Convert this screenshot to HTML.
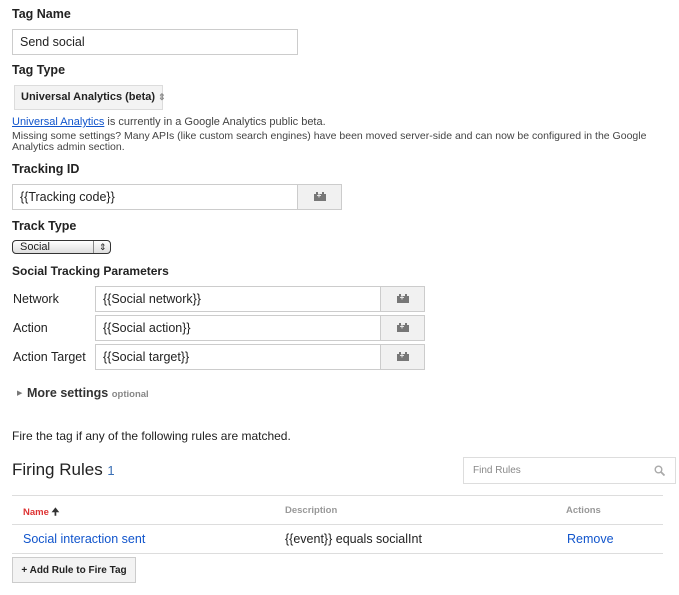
<!DOCTYPE html>
<html><head><style>
body{margin:0;width:679px;height:595px;background:#fff;font-family:"Liberation Sans",Arial,sans-serif;color:#222;position:relative;overflow:hidden}
.a{position:absolute;white-space:nowrap}
.h{font-weight:bold;font-size:12.5px}
.in{position:absolute;border:1px solid #ccc;box-sizing:border-box;font-size:12.5px;padding-left:7px;line-height:24px;background:#fff}
.bt{position:absolute;border:1px solid #ccc;border-left:none;box-sizing:border-box;background:#f1f1f1}
.bt i{position:absolute;left:50%;top:50%;width:12px;height:7px;margin:-3px 0 0 -6px;background:#777}
.bt i:before{content:"";position:absolute;left:2px;top:-2px;width:2px;height:2px;background:#777;box-shadow:6px 0 #777}
.bt i:after{content:"+";position:absolute;left:3px;top:-3px;color:#eee;font-size:8px;font-weight:bold}
.s{font-size:11px}
</style></head><body>
<div class="a h" style="left:12px;top:7px">Tag Name</div>
<div class="in" style="left:12px;top:29px;width:286px;height:26px">Send social</div>
<div class="a h" style="left:12px;top:63px">Tag Type</div>
<div class="a" style="left:14px;top:85px;width:149px;height:25px;box-sizing:border-box;border:1px solid #dcdcdc;background:#f3f3f3;font-size:11px;font-weight:bold;line-height:23px;padding-left:6px">Universal Analytics (beta) <span style="color:#888;font-size:9px">&#8661;</span></div>
<div class="a s" style="left:12px;top:116px;color:#444"><span style="color:#15c;text-decoration:underline">Universal Analytics</span> is currently in a Google Analytics public beta.</div>
<div class="a" style="left:12px;top:131px;color:#444;font-size:10.5px;line-height:11px;white-space:normal;width:665px">Missing some settings? Many APIs (like custom search engines) have been moved server-side and can now be configured in the Google Analytics admin section.</div>
<div class="a h" style="left:12px;top:162px">Tracking ID</div>
<div class="in" style="left:12px;top:184px;width:286px;height:26px">{{Tracking code}}</div>
<div class="bt" style="left:298px;top:184px;width:44px;height:26px"><i></i></div>
<div class="a h" style="left:12px;top:219px">Track Type</div>
<div class="a" style="left:12px;top:240px;width:99px;height:14px;box-sizing:border-box;border:1px solid #333;border-radius:4px;background:linear-gradient(#fff,#ddd);font-size:11px;line-height:12px;padding-left:7px">Social<span style="position:absolute;left:80px;top:0;height:12px;border-left:1px solid #888;padding-left:5px;font-size:9px">&#8661;</span></div>
<div class="a" style="left:12px;top:264px;font-weight:bold;font-size:12px">Social Tracking Parameters</div>
<div class="a" style="left:13px;top:292px;font-size:12.5px">Network</div>
<div class="in" style="left:95px;top:286px;width:286px;height:26px">{{Social network}}</div>
<div class="bt" style="left:381px;top:286px;width:44px;height:26px"><i></i></div>
<div class="a" style="left:13px;top:321px;font-size:12.5px">Action</div>
<div class="in" style="left:95px;top:315px;width:286px;height:26px">{{Social action}}</div>
<div class="bt" style="left:381px;top:315px;width:44px;height:26px"><i></i></div>
<div class="a" style="left:13px;top:350px;font-size:12.5px">Action Target</div>
<div class="in" style="left:95px;top:344px;width:286px;height:26px">{{Social target}}</div>
<div class="bt" style="left:381px;top:344px;width:44px;height:26px"><i></i></div>
<div class="a" style="left:17px;top:389px;font-size:7px;color:#777">&#9654;</div>
<div class="a" style="left:27px;top:386px;font-size:12.5px;font-weight:bold;color:#333">More settings <span style="font-size:9.5px;color:#888">optional</span></div>
<div class="a" style="left:12px;top:429px;font-size:12px">Fire the tag if any of the following rules are matched.</div>
<div class="a" style="left:12px;top:460px;font-size:17px;color:#222">Firing Rules <span style="font-size:13px;color:#3a6fb5">1</span></div>
<div class="a" style="left:463px;top:457px;width:213px;height:27px;box-sizing:border-box;border:1px solid #ddd;font-size:10px;color:#888;line-height:26px;padding-left:9px">Find Rules<svg style="position:absolute;right:10px;top:7px" width="11" height="11" viewBox="0 0 11 11"><circle cx="4.5" cy="4.5" r="3.3" fill="none" stroke="#aaa" stroke-width="1.4"/><path d="M7 7l3.5 3.5" stroke="#aaa" stroke-width="1.8"/></svg></div>
<div class="a" style="left:12px;top:495px;width:651px;border-top:1px solid #ddd"></div>
<div class="a" style="left:23px;top:505px;font-size:9.5px;font-weight:bold;color:#d33">Name <span style="color:#333">&#129033;</span></div>
<div class="a" style="left:285px;top:505px;font-size:9.5px;font-weight:bold;color:#999">Description</div>
<div class="a" style="left:566px;top:505px;font-size:9.5px;font-weight:bold;color:#999">Actions</div>
<div class="a" style="left:12px;top:524px;width:651px;border-top:1px solid #ddd"></div>
<div class="a" style="left:23px;top:532px;font-size:12.5px;color:#15c">Social interaction sent</div>
<div class="a" style="left:285px;top:532px;font-size:12.5px">{{event}} equals socialInt</div>
<div class="a" style="left:567px;top:532px;font-size:12.5px;color:#15c">Remove</div>
<div class="a" style="left:12px;top:553px;width:651px;border-top:1px solid #ddd"></div>
<div class="a" style="left:12px;top:557px;width:124px;height:26px;box-sizing:border-box;border:1px solid #ccc;background:#f3f3f3;font-size:10px;font-weight:bold;line-height:25px;text-align:center">+ Add Rule to Fire Tag</div>
</body></html>
